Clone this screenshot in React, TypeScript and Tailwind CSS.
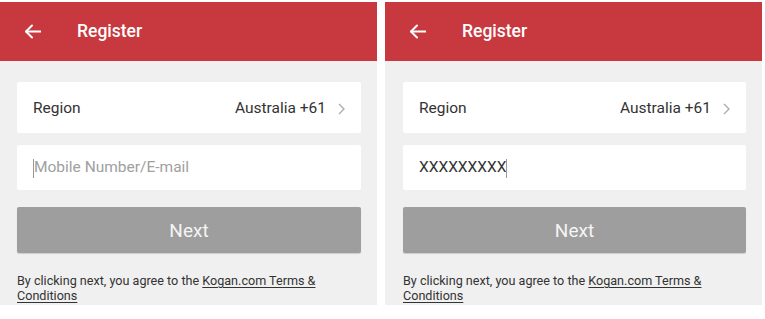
import React from "react";

function Panel({ value, left }: { value?: string; left?: boolean }) {
  return (
    <div className="w-[377px] h-[303px] bg-[#f0f0f0] flex flex-col">
      <div className="h-[59px] bg-[#c8393f] flex items-center pl-[24px] text-white">
        <svg width="17" height="15" viewBox="0 0 17 15" fill="none" stroke="white" strokeWidth="2" strokeLinecap="square">
          <path d="M16 7.5H2.5" />
          <path d="M8 1.5L2 7.5L8 13.5" strokeLinecap="round" strokeLinejoin="round" />
        </svg>
        <span className="ml-[36px] pt-[1px] text-[17.5px] font-medium leading-none">Register</span>
      </div>
      <div className={left ? "pl-[17px] pr-[16px] pt-[21px] flex flex-col" : "pl-[18px] pr-[16px] pt-[21px] flex flex-col"}>
        <div className="h-[51px] bg-white rounded-[2px] flex items-center justify-between pl-[16px] pr-[16px] pt-[2px] text-[15.5px] text-[#333]">
          <span>Region</span>
          <span className="flex items-center">
            <span>Australia +61</span>
            <svg className="ml-[12px]" width="7" height="12" viewBox="0 0 7 12" fill="none" stroke="#aaa" strokeWidth="1.3">
              <path d="M1 1L6 6L1 11" />
            </svg>
          </span>
        </div>
        <div className="mt-[12px] h-[45px] bg-white rounded-[2px] flex items-center pl-[16px] pt-[1px] text-[15.5px]">
          {value ? (
            <>
              <span className="text-[#333]">{value}</span>
              <span className="w-px h-[19px] bg-[#999]" />
            </>
          ) : (
            <>
              <span className="w-px h-[19px] bg-[#999]" />
              <span className="text-[#a0a0a0]">Mobile Number/E-mail</span>
            </>
          )}
        </div>
        <div className="mt-[17px] h-[46px] bg-[#9e9e9e] rounded-[2px] shadow-[0_1px_1px_rgba(0,0,0,0.15)] flex items-center justify-center pt-[3px] text-[19px] text-[#f5f5f5]">
          Next
        </div>
        <div className="mt-[20px] text-[12.6px] leading-[15px] text-[#333]">
          <div>
            By clicking next, you agree to the <span className="underline underline-offset-2">Kogan.com Terms &amp;</span>
          </div>
          <div>
            <span className="underline underline-offset-2">Conditions</span>
          </div>
        </div>
      </div>
    </div>
  );
}

export default function App() {
  return (
    <div className="w-[765px] h-[319px] bg-white pt-[2px] flex gap-[8px]" style={{ fontFamily: "Roboto, 'Noto Sans', sans-serif" }}>
      <Panel left />
      <Panel value="XXXXXXXXX" />
    </div>
  );
}
